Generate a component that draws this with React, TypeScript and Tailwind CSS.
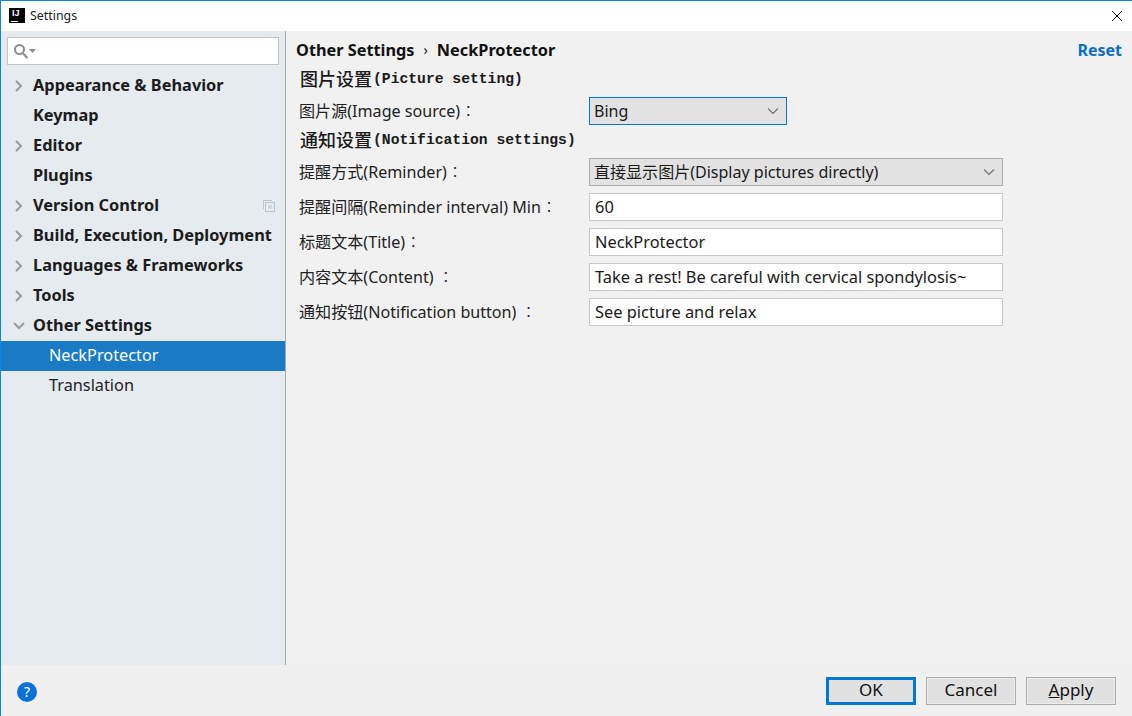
import React from "react";

const font = "font-['Noto_Sans','Noto_Sans_CJK_SC',sans-serif]";

function Chevron({ open }: { open?: boolean }) {
  return (
    <svg width="12" height="12" viewBox="0 0 12 12" className="shrink-0" fill="none" stroke="#9a9a9a" strokeWidth="2">
      {open ? <path d="M1 3 L6 8 L11 3" /> : <path d="M3 1 L8 6 L3 11" />}
    </svg>
  );
}

function SmallChevron() {
  return (
    <svg width="12" height="8" viewBox="0 0 12 8" fill="none" stroke="#6e6e6e" strokeWidth="1.1">
      <path d="M1 1.5 L6 6.5 L11 1.5" />
    </svg>
  );
}

function TreeRow({ label, arrow, open, copy }: { label: string; arrow?: boolean; open?: boolean; copy?: boolean }) {
  return (
    <div className="flex h-[30px] items-center pb-[1px] pl-[12px] pr-[9px]">
      <div className="w-[20px] shrink-0">{arrow && <Chevron open={open} />}</div>
      <span className="text-[16.35px] font-bold text-[#1c1c1c] whitespace-nowrap leading-none">{label}</span>
      {copy && (
        <svg className="ml-auto mr-[1px]" width="12" height="12" viewBox="0 0 12 12" fill="none" stroke="#bcc4cb" strokeWidth="1">
          <path d="M0.5 9 V0.5 H9" />
          <rect x="2.5" y="2.5" width="9" height="9" />
          <path d="M5 6 H9 M5 8 H9" />
        </svg>
      )}
    </div>
  );
}

function Heading({ zh, en, className = "" }: { zh: string; en: string; className?: string }) {
  return (
    <div className={`flex h-[20px] items-center pl-[14px] text-[#1a1a1a] whitespace-nowrap ${className}`}>
      <span className="text-[18px] font-medium leading-none">{zh}</span>
      <span className="ml-[1px] pt-[1px] font-['Liberation_Mono',monospace] text-[14.7px] font-bold leading-none">{en}</span>
    </div>
  );
}

function Row({ label, children, mt = "mt-[7px]" }: { label: string; children: React.ReactNode; mt?: string }) {
  return (
    <div className={`flex h-[28px] items-center ${mt}`}>
      <span className="w-[303px] shrink-0 pl-[13px] text-[16.1px] leading-none text-[#222] whitespace-pre">
        {label}
        <span className="font-['Noto_Sans_CJK_TC',sans-serif] font-light">：</span>
      </span>
      {children}
    </div>
  );
}

function Combo({ value, focus, wide }: { value: string; focus?: boolean; wide?: boolean }) {
  return (
    <div
      className={`flex h-[28px] items-center justify-between bg-[#e2e2e2] pl-[4px] pr-[7px] text-[16.05px] text-[#1a1a1a] border ${
        focus ? "border-[#0078d7]" : "border-[#adadad]"
      } ${wide ? "w-[414px]" : "w-[198px]"}`}
    >
      <span className="leading-none whitespace-nowrap">{value}</span>
      <SmallChevron />
    </div>
  );
}

function Field({ value }: { value: string }) {
  return (
    <div className="flex h-[28px] w-[414px] items-center border border-[#c8c8c8] bg-white pl-[5px] text-[16.4px] text-[#1a1a1a]">
      <span className="leading-none whitespace-nowrap">{value}</span>
    </div>
  );
}

function Btn({ label, primary, children }: { label?: string; primary?: boolean; children?: React.ReactNode }) {
  return (
    <div
      className={`flex h-[28px] w-[90px] items-center justify-center bg-[#e1e1e1] pb-[2px] text-[17px] text-[#111] ${
        primary ? "border-[3px] border-[#0078d7]" : "border border-[#adadad] shadow-[inset_0_0_0_1px_#ececec]"
      }`}
    >
      {label ?? children}
    </div>
  );
}

export default function App() {
  return (
    <div className={`flex h-[716px] w-[1132px] flex-col overflow-hidden border-l border-t border-[#0b84e4] bg-[#f0f0f0] ${font}`}>
      <div className="flex h-[30px] shrink-0 items-center bg-white pb-[1px] pl-[8px] pr-[8px]">
        <div className="relative h-[15px] w-[16px] shrink-0 bg-black">
          <span className="absolute left-[3px] top-[1px] font-['Liberation_Sans',sans-serif] text-[9px] font-bold leading-[9px] text-white">IJ</span>
          <span className="absolute bottom-[1px] left-[2px] h-[1px] w-[7px] bg-white" />
        </div>
        <span className="ml-[5px] mt-[1px] text-[12.4px] leading-none text-[#222]">Settings</span>
        <svg className="ml-auto mr-[1px]" width="12" height="12" viewBox="0 0 12 12" stroke="#111" strokeWidth="1" fill="none">
          <path d="M1 1 L11 11 M11 1 L1 11" />
        </svg>
      </div>

      <div className="flex min-h-0 flex-1">
        <aside className="flex w-[285px] shrink-0 flex-col border-r border-[#a9a9a9] bg-[#e6ebf0]">
          <div className="px-[6px] pb-[6px] pt-[6px]">
            <div className="flex h-[28px] w-[272px] items-center gap-[1px] border border-[#c4c4c4] bg-white pl-[6px]">
              <svg width="14" height="15" viewBox="0 0 14 15" fill="none" stroke="#8c8c8c" strokeWidth="2">
                <circle cx="5.5" cy="5.5" r="4.5" />
                <path d="M9 9.5 L13.5 14" />
              </svg>
              <svg width="7" height="4" viewBox="0 0 7 4" fill="#8c8c8c" className="mb-[1px]">
                <path d="M0 0 H7 L3.5 4 Z" />
              </svg>
            </div>
          </div>
          <TreeRow label="Appearance & Behavior" arrow />
          <TreeRow label="Keymap" />
          <TreeRow label="Editor" arrow />
          <TreeRow label="Plugins" />
          <TreeRow label="Version Control" arrow copy />
          <TreeRow label="Build, Execution, Deployment" arrow />
          <TreeRow label="Languages & Frameworks" arrow />
          <TreeRow label="Tools" arrow />
          <TreeRow label="Other Settings" arrow open />
          <div className="flex h-[30px] items-center bg-[#1a7bc4] pb-[1px] pl-[48px] text-[16.3px] leading-none text-white">NeckProtector</div>
          <div className="flex h-[30px] items-center pb-[1px] pl-[48px] text-[16.3px] leading-none text-[#222]">Translation</div>
        </aside>

        <main className="min-w-0 flex-1 bg-[#f1f1f1]">
          <div className="flex h-[38px] items-center pl-[10px] pr-[10px]">
            <span className="text-[16.3px] font-bold leading-none text-[#111]">Other Settings</span>
            <span className="mx-[9px] text-[14px] leading-none text-[#222]">›</span>
            <span className="text-[16.3px] font-bold leading-none text-[#111]">NeckProtector</span>
            <span className="ml-auto text-[16px] font-bold leading-none text-[#0a6fc2]">Reset</span>
          </div>
          <Heading zh="图片设置" en="(Picture setting)" />
          <Row label="图片源(Image source)" mt="mt-[8px]">
            <Combo value="Bing" focus />
          </Row>
          <Heading zh="通知设置" en="(Notification settings)" className="mt-[5px]" />
          <Row label="提醒方式(Reminder)" mt="mt-[8px]">
            <Combo value="直接显示图片(Display pictures directly)" wide />
          </Row>
          <Row label="提醒间隔(Reminder interval) Min">
            <Field value="60" />
          </Row>
          <Row label="标题文本(Title)">
            <Field value="NeckProtector" />
          </Row>
          <Row label="内容文本(Content) ">
            <Field value="Take a rest! Be careful with cervical spondylosis~" />
          </Row>
          <Row label="通知按钮(Notification button) ">
            <Field value="See picture and relax" />
          </Row>
        </main>
      </div>

      <footer className="flex h-[51px] shrink-0 items-start justify-between bg-[#f0f0f0] pl-[16px] pr-[16px] pt-[12px]">
        <div className="mt-[5px] flex h-[20px] w-[20px] items-center justify-center rounded-full bg-[#0a72d6] text-[14px] leading-none text-white">?</div>
        <div className="flex gap-[10px]">
          <Btn label="OK" primary />
          <Btn label="Cancel" />
          <Btn>
            <span><span className="underline">A</span>pply</span>
          </Btn>
        </div>
      </footer>
    </div>
  );
}
